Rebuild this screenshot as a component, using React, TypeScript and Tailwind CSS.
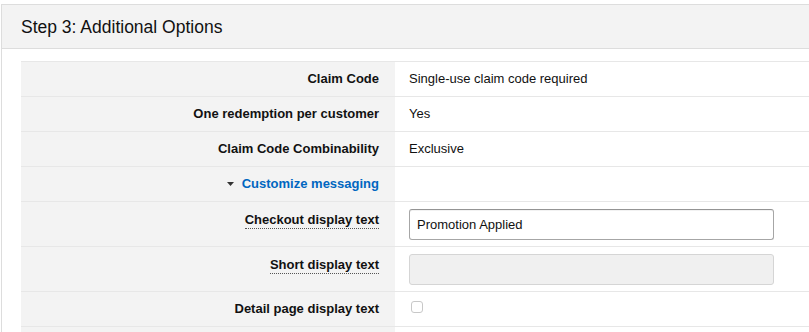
import { useState } from 'react'

type Row = {
  label: string
  value?: string
  kind?: 'text' | 'link' | 'input' | 'disabled' | 'checkbox' | 'empty'
  hint?: boolean
}

const rows: Row[] = [
  { label: 'Claim Code', value: 'Single-use claim code required' },
  { label: 'One redemption per customer', value: 'Yes' },
  { label: 'Claim Code Combinability', value: 'Exclusive' },
  { label: 'Customize messaging', kind: 'link' },
  { label: 'Checkout display text', kind: 'input', hint: true },
  { label: 'Short display text', kind: 'disabled', hint: true },
  { label: 'Detail page display text', kind: 'checkbox' },
  { label: '', kind: 'empty' },
]

function Label({ row }: { row: Row }) {
  if (row.kind === 'link') {
    return (
      <span className="flex items-center gap-[8px] font-bold text-[#0066c0]">
        <svg width="7" height="4" viewBox="0 0 7 4" className="mt-[-1px]">
          <path d="M0 0 L7 0 L3.5 4 Z" fill="#333" />
        </svg>
        {row.label}
      </span>
    )
  }
  return (
    <span
      className={
        row.hint
          ? 'font-bold text-[#111] border-b border-dotted border-[#555] leading-[16px]'
          : 'font-bold text-[#111]'
      }
    >
      {row.label}
    </span>
  )
}

export default function App() {
  const [checkout, setCheckout] = useState('Promotion Applied')

  return (
    <div className="w-[809px] h-[332px] overflow-hidden bg-white pt-[4px] font-['Liberation_Sans',Arial,sans-serif] text-[13px] text-[#111]">
      <div className="border-l border-t border-[#dddddd] ml-[1px] h-full">
        <div className="h-[44px] bg-[#f3f3f3] border-b border-[#dddddd] flex items-center pl-[19px] pt-[1px]">
          <h2 className="text-[17.5px] text-[#111]">Step 3: Additional Options</h2>
        </div>
        <div className="pl-[19px] pt-[12px]">
          <div className="border-t border-[#e7e7e7]">
            {rows.map((row, i) => {
              const tall = row.kind === 'input' || row.kind === 'disabled'
              return (
                <div key={i} className={`flex border-b border-[#e7e7e7] ${tall ? 'h-[45px]' : 'h-[35px]'}`}>
                  <div
                    className={`w-[374px] shrink-0 bg-[#f3f3f3] flex justify-end pr-[16px] ${
                      tall ? 'items-start pt-[10px]' : 'items-center'
                    }`}
                  >
                    <Label row={row} />
                  </div>
                  <div className="flex-1 flex items-center pl-[14px]">
                    {row.value && <span>{row.value}</span>}
                    {row.kind === 'input' && (
                      <input
                        value={checkout}
                        onChange={(e) => setCheckout(e.target.value)}
                        className="w-[365px] h-[31px] border border-[#a6a6a6] border-t-[#949494] rounded-[3px] px-[7px] text-[13px] text-[#111] outline-none shadow-[inset_0_1px_0_rgba(0,0,0,0.05)]"
                      />
                    )}
                    {row.kind === 'disabled' && (
                      <div className="w-[365px] h-[31px] border border-[#d5d5d5] rounded-[3px] bg-[#f0f0f0]" />
                    )}
                    {row.kind === 'checkbox' && (
                      <div className="ml-[2px] mb-[5px] w-[12px] h-[12px] border border-[#c8c8c8] rounded-[3px] bg-white" />
                    )}
                  </div>
                </div>
              )
            })}
          </div>
        </div>
      </div>
    </div>
  )
}
